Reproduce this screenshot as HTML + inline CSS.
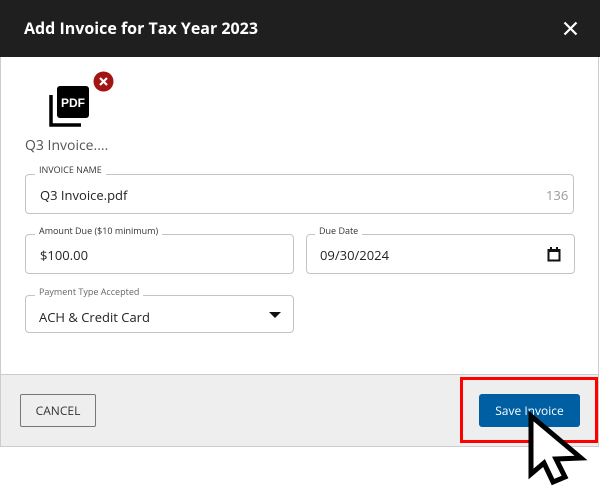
<!DOCTYPE html>
<html><head><style>
*{box-sizing:border-box;margin:0;padding:0}
body{width:600px;height:499px;background:#fff;font-family:"Open Sans","Liberation Sans",sans-serif;position:relative;overflow:hidden}
.a{position:absolute}
.hdr{left:0;top:0;width:600px;height:57px;background:#1f1f1f}
.title{left:24px;top:17px;color:#fff;font-weight:bold;font-size:16px}
.dlg{left:0;top:57px;width:599px;height:390px;border-left:1px solid #ccc;border-right:1px solid #ccc;border-bottom:1px solid #ccc}
.foot{left:1px;top:374px;width:597px;height:72px;background:#eee;border-top:1px solid #ccc}
.fld{border:1px solid #c4c4c4;border-radius:4px;background:#fff}
.lbl{font-size:9px;color:#333;background:#fff;padding:0 4px;white-space:nowrap}
.val{font-size:13px;color:#222}
</style></head><body>
<div class="a hdr"></div>
<div class="a title">Add Invoice for Tax Year 2023</div>
<svg class="a" style="left:563px;top:21px" width="15" height="15"><path d="M1.5 1.5L13.5 13.5M13.5 1.5L1.5 13.5" stroke="#fff" stroke-width="2.2"/></svg>
<div class="a dlg"></div>
<svg class="a" style="left:48px;top:84px" width="46" height="44">
<path d="M3 11V41H33" stroke="#000" stroke-width="3.5" fill="none"/>
<rect x="9" y="2" width="32" height="32" rx="3" fill="#000"/>
<text x="25" y="23" font-family="Liberation Sans" font-weight="bold" font-size="12" fill="#fff" text-anchor="middle">PDF</text>
</svg>
<svg class="a" style="left:93px;top:71px" width="21" height="21"><circle cx="10.5" cy="10.5" r="10" fill="#a31515"/><path d="M7 7L14 14M14 7L7 14" stroke="#fff" stroke-width="2.2"/></svg>
<div class="a" style="left:25px;top:136px;font-size:14px;color:#555">Q3 Invoice....</div>
<div class="a fld" style="left:25px;top:174px;width:549px;height:40px"></div>
<div class="a lbl" style="left:35px;top:163px">INVOICE NAME</div>
<div class="a val" style="left:40px;top:186px">Q3 Invoice.pdf</div>
<div class="a" style="left:546px;top:186px;font-size:13px;color:#999">136</div>
<div class="a fld" style="left:25px;top:234px;width:269px;height:40px"></div>
<div class="a lbl" style="left:35px;top:224px">Amount Due ($10 minimum)</div>
<div class="a val" style="left:40px;top:246px">$100.00</div>
<div class="a fld" style="left:306px;top:234px;width:269px;height:40px"></div>
<div class="a lbl" style="left:315px;top:224px">Due Date</div>
<div class="a val" style="left:320px;top:246px">09/30/2024</div>
<svg class="a" style="left:547px;top:247px" width="14" height="15"><rect x="1.5" y="3" width="11" height="10.5" fill="none" stroke="#111" stroke-width="2"/><rect x="1" y="2" width="12" height="3" fill="#111"/><rect x="3" y="0" width="2" height="3" fill="#111"/><rect x="9" y="0" width="2" height="3" fill="#111"/></svg>
<div class="a fld" style="left:25px;top:295px;width:269px;height:38px"></div>
<div class="a lbl" style="left:35px;top:285px;color:#666">Payment Type Accepted</div>
<div class="a val" style="left:39px;top:308px">ACH &amp; Credit Card</div>
<svg class="a" style="left:269px;top:312px" width="12" height="7"><path d="M0 0H12L6 6Z" fill="#111"/></svg>
<div class="a foot"></div>
<div class="a" style="left:20px;top:394px;width:76px;height:33px;border:1px solid #777;border-radius:2px;font-size:12px;color:#333;text-align:center;line-height:31px">CANCEL</div>
<div class="a" style="left:479px;top:394px;width:101px;height:33px;background:#005ea2;border-radius:3px;font-size:12px;color:#fff;text-align:center;line-height:33px">Save Invoice</div>
<div class="a" style="left:460px;top:377px;width:138px;height:66px;border:3px solid #f00"></div>
<svg class="a" style="left:525px;top:410px" width="64" height="76"><path d="M6 6V64L19 53L28 72L40 67L31 49L56 48Z" fill="#fff" stroke="#000" stroke-width="5" stroke-linejoin="miter"/></svg>
</body></html>
